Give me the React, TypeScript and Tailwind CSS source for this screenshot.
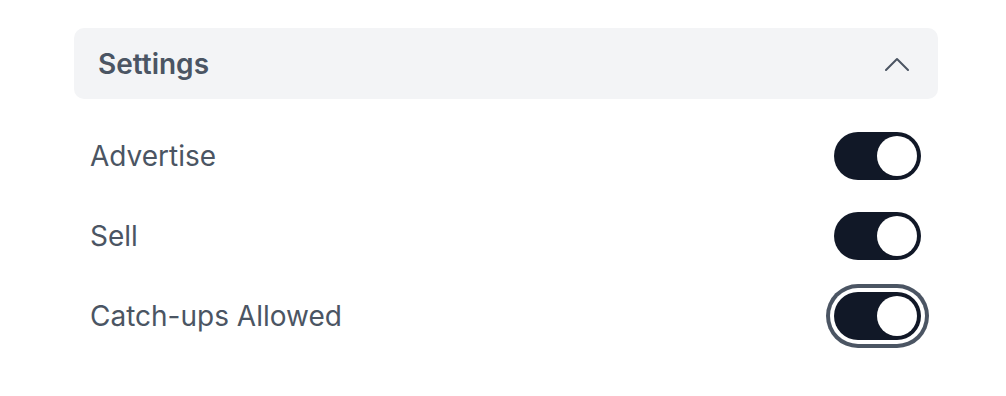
import React, { useState } from 'react';

const rows = [
  { id: 'advertise', label: 'Advertise' },
  { id: 'sell', label: 'Sell' },
  { id: 'catchups', label: 'Catch-ups Allowed', focused: true },
];

const Toggle = ({ on, focused, onClick }: { on: boolean; focused?: boolean; onClick: () => void }) => (
  <button
    type="button"
    onClick={onClick}
    className={`relative flex h-[48px] w-[87px] items-center rounded-full px-[4px] ${on ? 'justify-end bg-[#111827]' : 'justify-start bg-gray-200'} ${focused ? 'ring-[4px] ring-[#4b5563] ring-offset-[4px] ring-offset-white' : ''}`}
  >
    <span className="block h-[40px] w-[40px] rounded-full bg-white" />
  </button>
);

export default function App() {
  const [state, setState] = useState<Record<string, boolean>>({ advertise: true, sell: true, catchups: true });

  return (
    <div className="min-h-screen bg-white pt-[28px] pl-[74px]" style={{ fontFamily: 'Inter, "Noto Sans", sans-serif' }}>
      <div className="w-[864px]">
        {/* Header */}
        <div className="flex h-[71px] items-center justify-between rounded-[10px] bg-[#f3f4f6] pl-[24px] pr-[29px]">
          <span className="text-[28px] font-semibold text-[#4b5563]">Settings</span>
          <svg width="24" height="14" viewBox="0 0 24 14" fill="none" stroke="#4b5563" strokeWidth="2" strokeLinecap="round" strokeLinejoin="round">
            <polyline points="1,13 12,2 23,13" />
          </svg>
        </div>

        {/* Rows */}
        <div className="mt-[17px] flex flex-col">
          {rows.map((r) => (
            <div key={r.id} className="flex h-[80px] items-center justify-between pl-[16px] pr-[17px]">
              <span className="text-[28px] text-[#4b5563]">{r.label}</span>
              <Toggle
                on={state[r.id]}
                focused={r.focused}
                onClick={() => setState((s) => ({ ...s, [r.id]: !s[r.id] }))}
              />
            </div>
          ))}
        </div>
      </div>
    </div>
  );
}
